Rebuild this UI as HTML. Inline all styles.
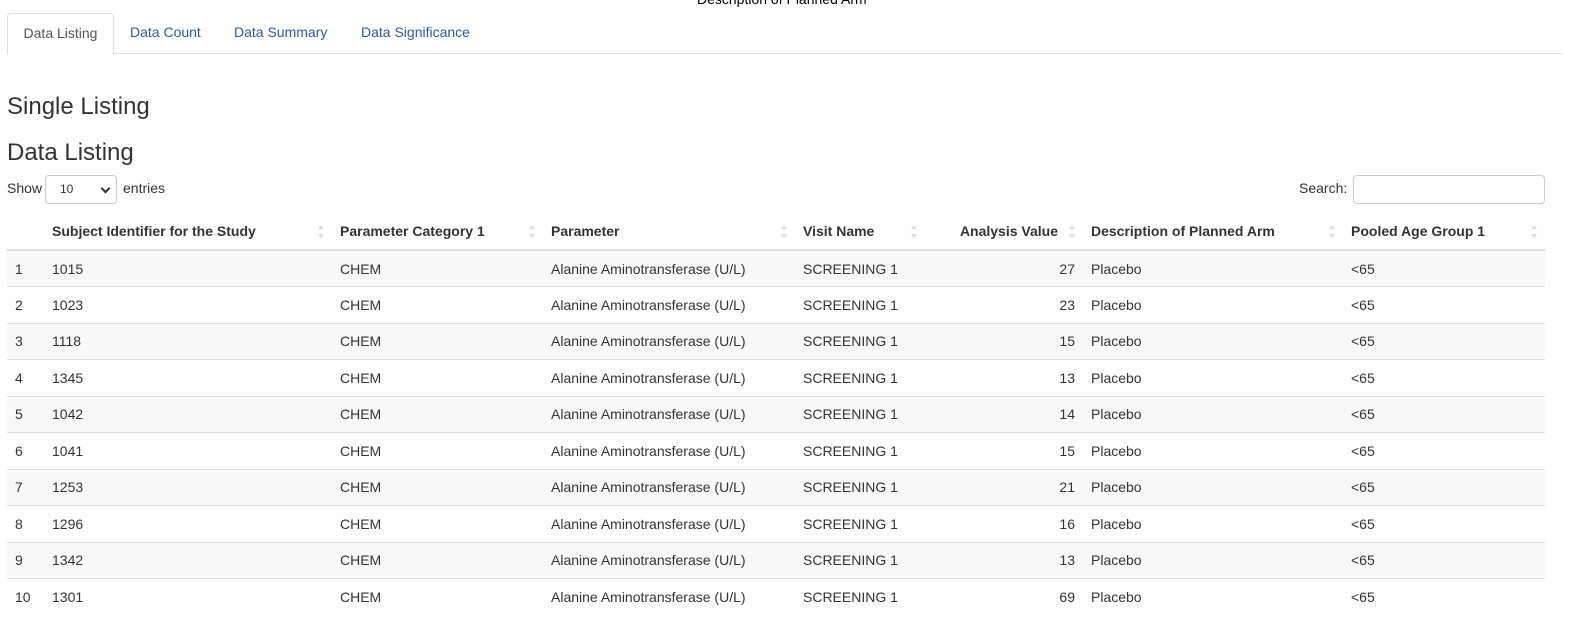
<!DOCTYPE html>
<html><head><style>
body{margin:0;font-family:"Liberation Sans",sans-serif;font-size:14px;color:#333;background:#fff;width:1592px;height:630px;overflow:hidden;position:relative}
.top{position:absolute;left:697px;top:-9px;font-size:14px;color:#000}
.tabs{position:absolute;left:7px;top:13px;right:30px;height:40px;border-bottom:1px solid #ddd}
.tab{position:absolute;top:0;height:40px;line-height:38px;color:#2a5b9b;font-size:14px}
.tab.act{left:0;width:105px;border:1px solid #ddd;border-bottom:1px solid #fff;border-radius:4px 4px 0 0;color:#555;text-align:center;background:#fff;height:40px}
h1{position:absolute;left:7px;margin:0;font-weight:400;font-size:24px;color:#333}
.show{position:absolute;left:7px;top:180px}
.sel{position:absolute;left:45px;top:175px;width:72px;height:29px;border:1px solid #ccc;border-radius:4px;box-sizing:border-box;font-size:12px;line-height:27px;padding-left:14px}
.sel:after{content:"";position:absolute;right:7px;top:9px;width:5px;height:5px;border-right:2px solid #333;border-bottom:2px solid #333;transform:rotate(45deg)}
.search{position:absolute;left:1299px;top:180px}
.inp{position:absolute;left:1353px;top:175px;width:192px;height:29px;border:1px solid #ccc;border-radius:4px;box-sizing:border-box}
table{position:absolute;left:7px;top:213px;width:1538px;border-collapse:collapse;table-layout:fixed}
th{font-weight:700;text-align:left;height:37px;padding:0 8px;border-bottom:2px solid #ddd;position:relative;box-sizing:border-box}
td{height:36.5px;padding:0 8px;border-top:1px solid #ddd;box-sizing:border-box}
tbody tr:nth-child(odd){background:#f9f9f9}
tbody tr:first-child td{border-top:none}
.r{text-align:right}
.s{position:absolute;right:7px;top:12px;width:7px;height:14px}
.s:before{content:"";position:absolute;left:0;top:0;border:3.5px solid transparent;border-bottom:4px solid #ddd;border-top:none}
.s:after{content:"";position:absolute;left:0;bottom:1px;border:3.5px solid transparent;border-top:4px solid #ddd;border-bottom:none}
</style></head><body>
<div class="top">Description of Planned Arm</div>
<div class="tabs">
<div class="tab act">Data Listing</div>
<div class="tab" style="left:123px">Data Count</div>
<div class="tab" style="left:227px">Data Summary</div>
<div class="tab" style="left:354px">Data Significance</div>
</div>
<h1 style="top:93px">Single Listing</h1>
<h1 style="top:139px">Data Listing</h1>
<div class="show">Show</div><div class="sel">10</div><div class="show" style="left:123px">entries</div>
<div class="search">Search:</div><div class="inp"></div>
<table>
<colgroup><col style="width:37px"><col style="width:288px"><col style="width:211px"><col style="width:252px"><col style="width:130px"><col style="width:158px"><col style="width:260px"><col style="width:202px"></colgroup>
<thead><tr><th></th><th>Subject Identifier for the Study<span class="s"></span></th><th>Parameter Category 1<span class="s"></span></th><th>Parameter<span class="s"></span></th><th>Visit Name<span class="s"></span></th><th class="r" style="padding-right:25px">Analysis Value<span class="s"></span></th><th>Description of Planned Arm<span class="s"></span></th><th>Pooled Age Group 1<span class="s"></span></th></tr></thead>
<tbody>
<tr><td>1</td><td>1015</td><td>CHEM</td><td>Alanine Aminotransferase (U/L)</td><td>SCREENING 1</td><td class="r">27</td><td>Placebo</td><td>&lt;65</td></tr>
<tr><td>2</td><td>1023</td><td>CHEM</td><td>Alanine Aminotransferase (U/L)</td><td>SCREENING 1</td><td class="r">23</td><td>Placebo</td><td>&lt;65</td></tr>
<tr><td>3</td><td>1118</td><td>CHEM</td><td>Alanine Aminotransferase (U/L)</td><td>SCREENING 1</td><td class="r">15</td><td>Placebo</td><td>&lt;65</td></tr>
<tr><td>4</td><td>1345</td><td>CHEM</td><td>Alanine Aminotransferase (U/L)</td><td>SCREENING 1</td><td class="r">13</td><td>Placebo</td><td>&lt;65</td></tr>
<tr><td>5</td><td>1042</td><td>CHEM</td><td>Alanine Aminotransferase (U/L)</td><td>SCREENING 1</td><td class="r">14</td><td>Placebo</td><td>&lt;65</td></tr>
<tr><td>6</td><td>1041</td><td>CHEM</td><td>Alanine Aminotransferase (U/L)</td><td>SCREENING 1</td><td class="r">15</td><td>Placebo</td><td>&lt;65</td></tr>
<tr><td>7</td><td>1253</td><td>CHEM</td><td>Alanine Aminotransferase (U/L)</td><td>SCREENING 1</td><td class="r">21</td><td>Placebo</td><td>&lt;65</td></tr>
<tr><td>8</td><td>1296</td><td>CHEM</td><td>Alanine Aminotransferase (U/L)</td><td>SCREENING 1</td><td class="r">16</td><td>Placebo</td><td>&lt;65</td></tr>
<tr><td>9</td><td>1342</td><td>CHEM</td><td>Alanine Aminotransferase (U/L)</td><td>SCREENING 1</td><td class="r">13</td><td>Placebo</td><td>&lt;65</td></tr>
<tr><td>10</td><td>1301</td><td>CHEM</td><td>Alanine Aminotransferase (U/L)</td><td>SCREENING 1</td><td class="r">69</td><td>Placebo</td><td>&lt;65</td></tr>
</tbody></table>
</body></html>
